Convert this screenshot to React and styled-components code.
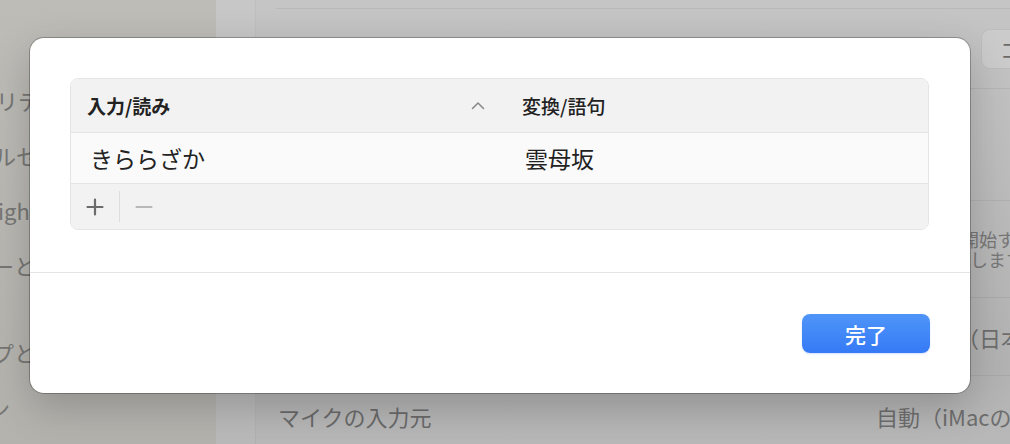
import React from "react";
import styled, { createGlobalStyle } from "styled-components";

const GlobalStyle = createGlobalStyle`
  html, body {
    margin: 0;
    padding: 0;
  }
  body {
    width: 1010px;
    height: 444px;
    overflow: hidden;
    font-family: "Noto Sans CJK JP", "Noto Sans", sans-serif;
  }
`;

const Screen = styled.div`
  position: relative;
  width: 1010px;
  height: 444px;
  overflow: hidden;
  display: grid;
  grid-template-columns: 216px 40px 1fr;
`;

const Sidebar = styled.div`
  background: linear-gradient(180deg, #bdbcb7 0%, #b3b2ad 100%);
  padding-top: 72px;
  display: flex;
  flex-direction: column;
  overflow: hidden;
`;

const SideItem = styled.div`
  height: 55px;
  flex: none;
  display: flex;
  align-items: center;
  font-size: 22px;
  color: #767674;
  white-space: nowrap;
  margin-left: ${(p) => -p.$shift}px;
  margin-top: ${(p) => p.$gap || 0}px;
`;

const Strip = styled.div`
  background: linear-gradient(180deg, #c7c7c7 0%, #b9b9b9 100%);
  border-right: 1px solid rgba(0, 0, 0, 0.04);
`;

const Main = styled.div`
  background: linear-gradient(180deg, #c5c5c5 0%, #b2b2b2 80%, #b9b9b9 100%);
  padding: 8px 0 0 20px;
  display: flex;
  flex-direction: column;
  min-width: 0;
`;

const Row = styled.div`
  height: ${(p) => p.$h}px;
  flex: none;
  box-sizing: border-box;
  border-top: 1px solid rgba(0, 0, 0, 0.06);
  display: grid;
  grid-template-columns: ${(p) => p.$valueX - 276}px max-content;
  align-items: center;
  white-space: nowrap;
`;

const Label = styled.div`
  padding-left: 2px;
  font-size: 22px;
  color: #6a6a6a;
`;

const Value = styled.div`
  font-size: 22px;
  color: #6e6e6e;
`;

const Note = styled.div`
  font-size: 18px;
  line-height: 20px;
  color: #777;
  padding-left: ${(p) => p.$indent || 0}px;
`;

const GhostButton = styled.div`
  height: 40px;
  box-sizing: border-box;
  padding: 0 18px;
  display: flex;
  align-items: center;
  font-size: 21px;
  color: #6a6a6a;
  background: #cbcbcb;
  border: 1px solid rgba(0, 0, 0, 0.07);
  border-radius: 9px;
`;

const Dialog = styled.div`
  position: absolute;
  left: 30px;
  top: 38px;
  width: 940px;
  height: 355px;
  background: #fff;
  border-radius: 14px;
  box-shadow: 0 0 0 1px rgba(0, 0, 0, 0.26), 0 14px 40px rgba(0, 0, 0, 0.2);
  display: flex;
  flex-direction: column;
  overflow: hidden;
`;

const DialogBody = styled.div`
  padding: 40px 41px 42px 40px;
  border-bottom: 1px solid #e4e4e4;
`;

const Table = styled.div`
  border: 1px solid #e4e4e4;
  border-radius: 8px;
  overflow: hidden;
  display: flex;
  flex-direction: column;
`;

const TableRow = styled.div`
  height: ${(p) => p.$h}px;
  display: grid;
  grid-template-columns: 434px 1fr;
  align-items: center;
  background: ${(p) => p.$bg};
  border-bottom: ${(p) => (p.$line ? "1px solid #e4e4e4" : "none")};
`;

const HeadCell = styled.div`
  display: flex;
  align-items: center;
  justify-content: space-between;
  padding: 0 20px 0 ${(p) => p.$pad}px;
  font-size: 19px;
  font-weight: ${(p) => (p.$bold ? 700 : 500)};
  color: #222;
`;

const Cell = styled.div`
  padding-left: ${(p) => p.$pad}px;
  font-size: 23px;
  color: #222;
`;

const Footer = styled.div`
  height: 45px;
  background: #f2f2f2;
  display: flex;
  align-items: center;
  padding-left: 15px;
  gap: 15px;
`;

const ToolIcon = styled.svg`
  width: 18px;
  height: 18px;
  display: block;
`;

const ToolDivider = styled.div`
  width: 1px;
  height: 31px;
  background: #dedede;
`;

const Actions = styled.div`
  flex: 1;
  display: flex;
  justify-content: flex-end;
  align-items: flex-start;
  padding: 41px 40px 0 0;
`;

const PrimaryButton = styled.button`
  width: 128px;
  height: 39px;
  border: none;
  border-radius: 8px;
  background: linear-gradient(180deg, #4f95f8 0%, #357af6 100%);
  box-shadow: 0 1px 2px rgba(40, 100, 220, 0.2);
  color: #fff;
  font-family: "Noto Sans CJK JP", sans-serif;
  font-size: 21px;
  font-weight: 500;
  padding: 0;
`;

const Chevron = () => (
  <svg width="14" height="9" viewBox="0 0 14 9">
    <polyline points="1.5,7.5 7,2 12.5,7.5" fill="none" stroke="#8a8a8a" strokeWidth="1.6" strokeLinecap="round" strokeLinejoin="round" />
  </svg>
);

export default function App() {
  return (
    <>
      <GlobalStyle />
      <Screen>
        <Sidebar>
          <SideItem $shift={4}>リティ</SideItem>
          <SideItem $shift={6}>ルセンター</SideItem>
          <SideItem $shift={2}>ight</SideItem>
          <SideItem $shift={8}>ーとロック</SideItem>
          <SideItem $shift={8} $gap={32}>プとDock</SideItem>
          <SideItem $shift={12}>ン</SideItem>
        </Sidebar>
        <Strip />
        <Main>
          <Row $h={80} $valueX={981}>
            <Label>入力ソース</Label>
            <GhostButton>コマンド</GhostButton>
          </Row>
          <Row $h={112} $valueX={961}>
            <Label>音声入力</Label>
            <div />
          </Row>
          <Row $h={97} $valueX={961}>
            <Label>ショートカット</Label>
            <div>
              <Note>開始する</Note>
              <Note $indent={9}>します</Note>
            </div>
          </Row>
          <Row $h={78} $valueX={957}>
            <Label>言語</Label>
            <Value>（日本語）</Value>
          </Row>
          <Row $h={80} $valueX={876}>
            <Label>マイクの入力元</Label>
            <Value>自動（iMacのマイク）</Value>
          </Row>
        </Main>

        <Dialog>
          <DialogBody>
            <Table>
              <TableRow $h={53} $bg="#f2f2f2" $line>
                <HeadCell $pad={16} $bold>
                  <span>入力/読み</span>
                  <Chevron />
                </HeadCell>
                <HeadCell $pad={17}>
                  <span>変換/語句</span>
                </HeadCell>
              </TableRow>
              <TableRow $h={50} $bg="#fafafa" $line>
                <Cell $pad={19}>きららざか</Cell>
                <Cell $pad={20}>雲母坂</Cell>
              </TableRow>
              <Footer>
                <ToolIcon viewBox="0 0 18 18">
                  <path d="M9 1.5v15M1.5 9h15" stroke="#6b6b6b" strokeWidth="2.2" strokeLinecap="round" />
                </ToolIcon>
                <ToolDivider />
                <ToolIcon viewBox="0 0 18 18">
                  <path d="M1.5 9h15" stroke="#b8b8b8" strokeWidth="2.2" strokeLinecap="round" />
                </ToolIcon>
              </Footer>
            </Table>
          </DialogBody>
          <Actions>
            <PrimaryButton>完了</PrimaryButton>
          </Actions>
        </Dialog>
      </Screen>
    </>
  );
}
